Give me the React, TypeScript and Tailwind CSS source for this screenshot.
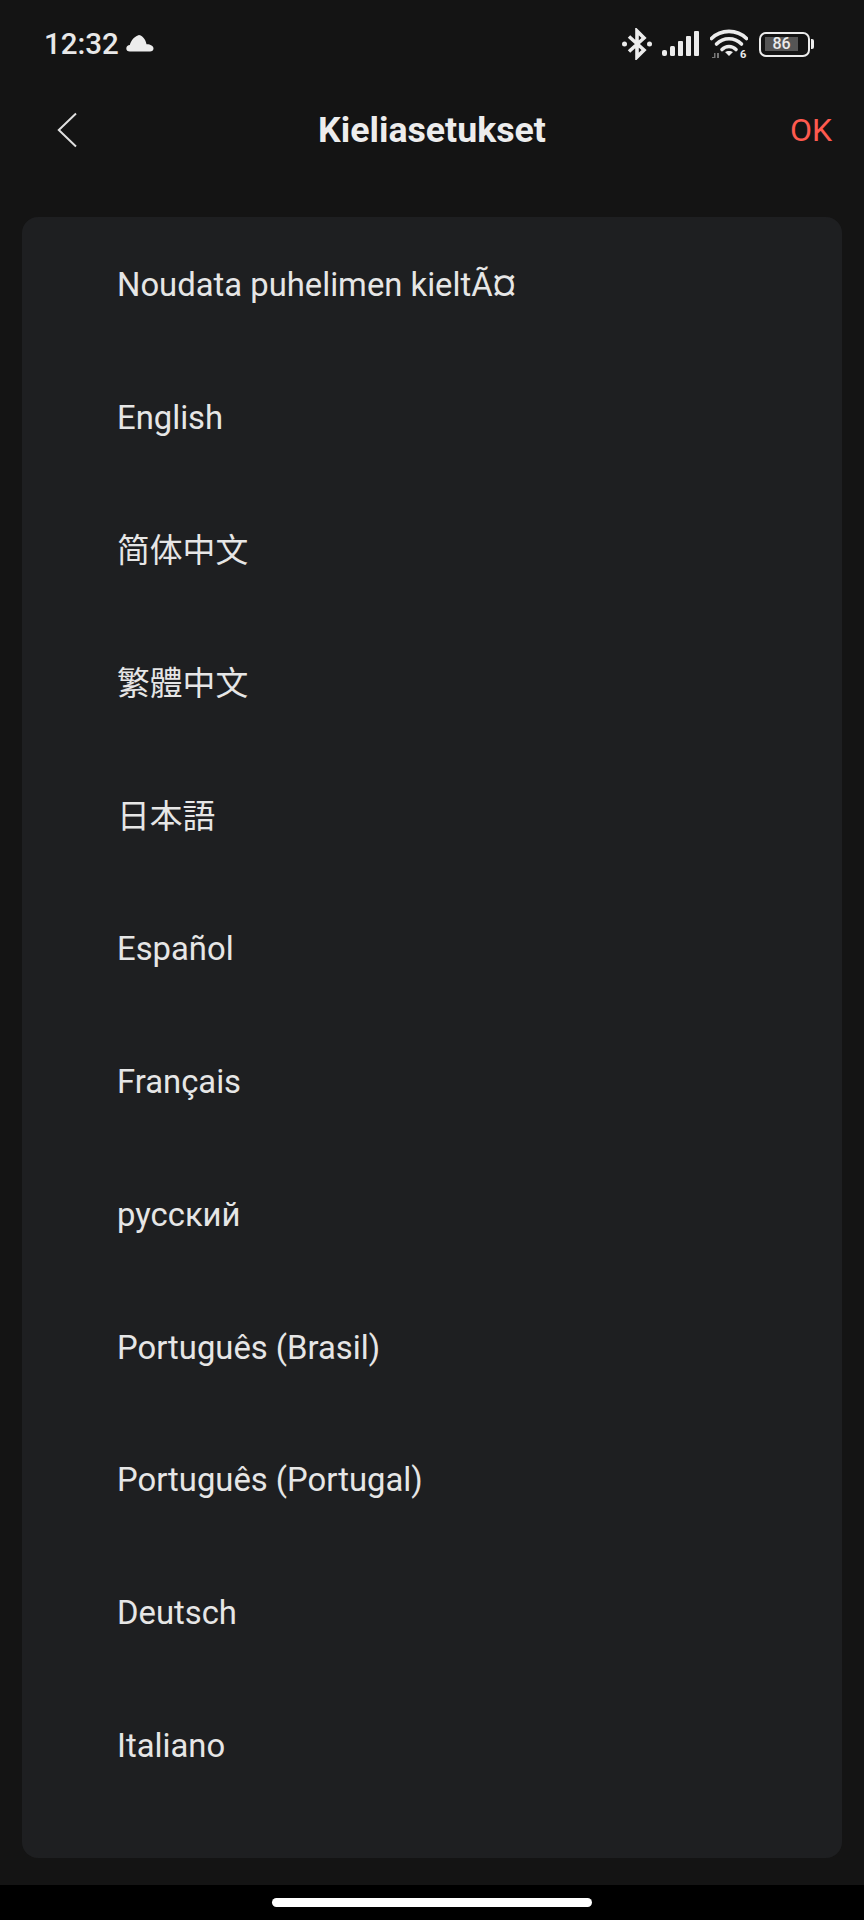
const langs = [
  "Noudata puhelimen kieltÃ¤",
  "English",
  "简体中文",
  "繁體中文",
  "日本語",
  "Español",
  "Français",
  "русский",
  "Português (Brasil)",
  "Português (Portugal)",
  "Deutsch",
  "Italiano",
];

const cjk = (s: string) => (s === "日本語" ? '"Noto Sans CJK JP"' : s === "繁體中文" ? '"Noto Sans CJK TC"' : '"Noto Sans CJK SC"');

export default function App() {
  return (
    <div className="w-[864px] h-[1920px] bg-[#141414] flex flex-col font-['Roboto','Noto_Sans_CJK_SC',sans-serif] overflow-hidden">
      <div className="h-[90px] shrink-0 flex items-start justify-between pl-[44px] pr-[50px] pt-[26px]">
        <div className="flex items-center gap-[7px] h-[36px]">
          <span className="text-[29.5px] leading-[36px] font-medium text-[#e8e8e8]">12:32</span>
          <svg width="28" height="18" viewBox="0 0 28 18" fill="#ececec" className="-mt-[3px]">
            <path d="M4 17.5C1.5 17.5 0.3 16 0.3 14.4 0.3 12.6 1.8 11.2 3.8 11.1 4.6 8.4 6.2 3.5 13 1 18 2 20 7.5 20.5 10.2 24 10 27.5 11.8 27.5 14.4 27.5 16.2 26 17.5 24 17.5Z" />
          </svg>
        </div>
        <div className="flex items-center h-[40px] -mt-[2px]">
          <svg width="30" height="32" viewBox="0 0 30 32" fill="none" stroke="#ececec" strokeWidth="3.6">
            <path d="M7 8.500 22 22 15 29V3L22 10 7 23.500" />
            <circle cx="2.500" cy="16" r="2.500" fill="#ececec" stroke="none" />
            <circle cx="27.500" cy="16" r="2.500" fill="#ececec" stroke="none" />
          </svg>
          <svg width="38" height="26" viewBox="0 0 38 26" fill="#ececec" className="ml-[10px]">
            <rect x="0" y="19" width="5" height="6" rx="2" />
            <rect x="8" y="15" width="5" height="10" rx="1.500" />
            <rect x="16" y="10" width="5" height="15" rx="1" />
            <rect x="24" y="5" width="5" height="20" rx="1" />
            <rect x="32" y="0" width="5" height="25" rx="1" />
          </svg>
          <svg width="38" height="30" viewBox="0 0 38 30" fill="none" stroke="#ececec" strokeWidth="3.6" className="ml-[10px]">
            <path d="M1.500 9.500C11 0 27 0 36.500 9.500" strokeLinecap="round" />
            <path d="M6.500 15C13.500 8 24.500 8 31.500 15" strokeLinecap="round" />
            <path d="M12 20.500C16 16.500 22 16.500 26 20.500" strokeLinecap="round" />
            <path d="M19 27 15 23C17 21.500 21 21.500 23 23Z" fill="#ececec" stroke="none" />
            <path d="M2 28H4V24H5.500V29H2ZM7 24H9V29H7Z" fill="#777777" stroke="none" />
            <text x="30" y="28.500" fontSize="11" fontWeight="700" fill="#ececec" stroke="none" fontFamily="Roboto">6</text>
          </svg>
          <div className="ml-[11px] flex items-center">
            <div className="w-[51px] h-[25px] border-[2.5px] border-[#ececec] rounded-[7px] flex items-center pl-[4px] py-[3px]">
              <div className="w-[33px] h-[14px] bg-[#555555] flex items-center justify-center text-[16px] leading-[14px] font-medium text-[#ececec]">86</div>
            </div>
            <div className="w-[3px] h-[10px] ml-[1px] bg-[#ececec] rounded-r-[2px]"></div>
          </div>
        </div>
      </div>
      <div className="h-[127px] shrink-0 relative flex items-center justify-between pl-[57px] pr-[32px] pb-[48px]">
        <svg width="20" height="36" viewBox="0 0 20 36" fill="none" stroke="#e0e0e0" strokeWidth="2">
          <path d="M19 1.500 1.800 18 19 34.500" />
        </svg>
        <span className="absolute left-0 right-0 text-center text-[35.7px] leading-[48px] font-bold text-[#ededed]">Kieliasetukset</span>
        <span className="text-[32px] leading-[48px] text-[#ff5a4f]">OK</span>
      </div>
      <div className="mx-[22px] h-[1641px] shrink-0 bg-[#1e1f21] rounded-[16px]">
        {langs.map((l) => {
          const isCjk = /[\u4e00-\u9fff]/.test(l);
          return (
            <div
              key={l}
              className={isCjk ? "h-[132.85px] flex items-center pl-[95px] pb-[3px] text-[32.8px] text-[#e6e6e6]" : "h-[132.85px] flex items-center pl-[95px] pt-[4px] text-[32.8px] text-[#e6e6e6]"}
              style={isCjk ? { fontFamily: cjk(l) + ", sans-serif" } : undefined}
            >
              {l}
            </div>
          );
        })}
      </div>
      <div className="flex-1"></div>
      <div className="h-[35px] shrink-0 bg-black flex justify-center pt-[13px]">
        <div className="w-[320px] h-[9px] bg-white rounded-full"></div>
      </div>
    </div>
  );
}
